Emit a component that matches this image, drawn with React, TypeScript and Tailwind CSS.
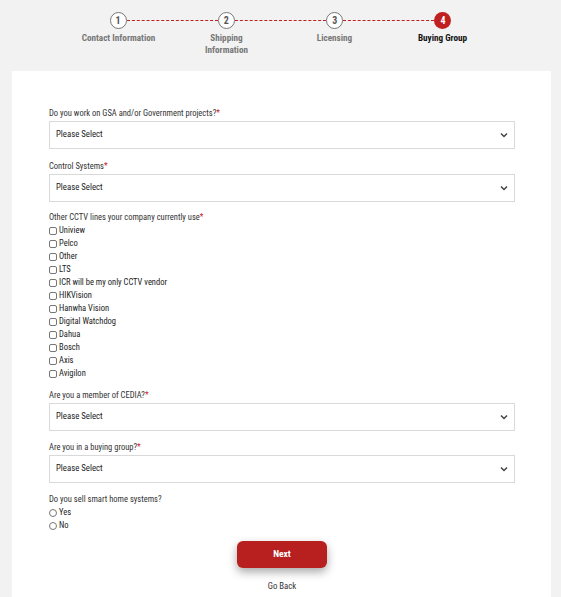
import React from "react";

function Chevron() {
  return (
    <svg width="8" height="6" viewBox="0 0 8 6" className="shrink-0">
      <path d="M1 1.5 L4 4.5 L7 1.5" fill="none" stroke="#444" strokeWidth="1.5" />
    </svg>
  );
}

function Req() {
  return <span className="text-[#d0201f]">*</span>;
}

function SelectField({ label }: { label: string }) {
  return (
    <div className="mb-[9px]">
      <div className="text-[8.5px] leading-[14px] text-[#333] mb-[1px] pt-[1px]">
        {label}
        <Req />
      </div>
      <div className="h-[28px] border border-[#d9d9d9] flex items-center justify-between pl-[6px] pr-[6px] bg-white">
        <span className="text-[8.75px] text-[#222]">Please Select</span>
        <Chevron />
      </div>
    </div>
  );
}

const cctv = [
  "Uniview",
  "Pelco",
  "Other",
  "LTS",
  "ICR will be my only CCTV vendor",
  "HIKVision",
  "Hanwha Vision",
  "Digital Watchdog",
  "Dahua",
  "Bosch",
  "Axis",
  "Avigilon",
];

const steps = [
  { n: 1, label: ["Contact Information"] },
  { n: 2, label: ["Shipping", "Information"] },
  { n: 3, label: ["Licensing"] },
  { n: 4, label: ["Buying Group"], active: true },
];

export default function App() {
  return (
    <div className="[font-family:Roboto] [font-stretch:75%] bg-[#f2f2f2] min-h-[597px] w-full overflow-hidden">
      {/* stepper */}
      <div className="pt-[12px]">
        <div className="w-[342px] mx-auto flex items-center">
          {steps.map((s, i) => (
            <React.Fragment key={s.n}>
              {s.active ? (
                <div className="w-[17px] h-[17px] rounded-full bg-[#c0201f] flex items-center justify-center text-white text-[10px] font-bold shrink-0">
                  {s.n}
                </div>
              ) : (
                <div className="w-[17px] h-[17px] rounded-full bg-white border-[1.5px] border-[#777] flex items-center justify-center text-[#555] text-[10px] font-bold shrink-0">
                  {s.n}
                </div>
              )}
              {i < steps.length - 1 && (
                <div className="flex-1 border-t-[1.5px] border-dashed border-[#c0201f]" />
              )}
            </React.Fragment>
          ))}
        </div>
        <div className="w-[432px] mx-auto grid grid-cols-4 mt-[3px]">
          {steps.map((s) => (
            <div
              key={s.n}
              className={`text-center text-[9.2px] leading-[11.5px] font-bold ${s.active ? "text-[#111]" : "text-[#777]"}`}
            >
              {s.label.map((l) => (
                <div key={l}>{l}</div>
              ))}
            </div>
          ))}
        </div>
      </div>

      {/* card */}
      <div className="mt-[16px] ml-[12px] mr-[10px] bg-white pt-[34px] pl-[37px] pr-[36px] pb-[20px]">
        <SelectField label="Do you work on GSA and/or Government projects?" />
        <SelectField label="Control Systems" />

        <div className="mb-[8px]">
          <div className="text-[8.5px] leading-[13px] text-[#333]">
            Other CCTV lines your company currently use
            <Req />
          </div>
          {cctv.map((c) => (
            <label key={c} className="flex items-center h-[13px] text-[8.5px] text-[#222]">
              <span className="w-[8px] h-[8px] border border-[#777] rounded-[2px] mr-[2px] shrink-0 bg-white" />
              {c}
            </label>
          ))}
        </div>

        <div className="-mt-[1px]">
          <SelectField label="Are you a member of CEDIA?" />
        </div>
        <div className="-mt-[1px]">
          <SelectField label="Are you in a buying group?" />
        </div>

        <div className="-mt-[1px]">
          <div className="text-[8.5px] leading-[14px] text-[#333] pt-[1px]">Do you sell smart home systems?</div>
          {["Yes", "No"].map((c) => (
            <label key={c} className="flex items-center h-[13px] text-[8.5px] text-[#222]">
              <span className="w-[8px] h-[8px] border border-[#777] rounded-full mr-[2px] shrink-0 bg-white" />
              {c}
            </label>
          ))}
        </div>

        <div className="flex flex-col items-center mt-[9px]">
          <button className="w-[90px] h-[27px] rounded-[6px] bg-[#b8201f] text-white text-[9.5px] font-bold shadow-[0_4px_10px_rgba(0,0,0,0.35)]">
            Next
          </button>
          <div className="mt-[12px] text-[8.75px] text-[#333]">Go Back</div>
        </div>
      </div>
    </div>
  );
}
